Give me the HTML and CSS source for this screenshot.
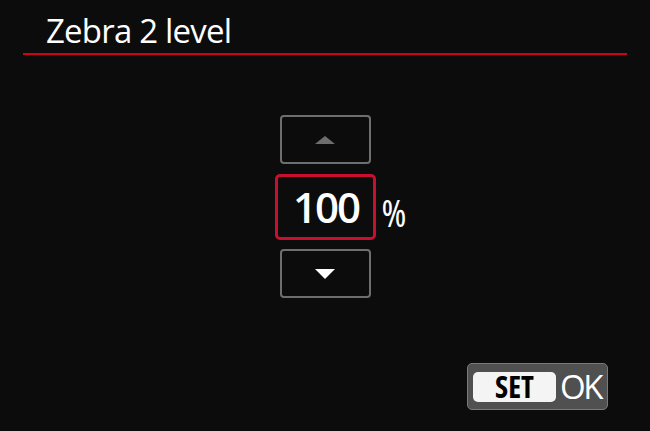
FILE: index.html
```html
<!DOCTYPE html>
<html lang="en">
  <head>
    <meta charset="UTF-8" />
    <meta name="viewport" content="width=device-width, initial-scale=1.0" />
    <title>Zebra 2 level</title>
    <link rel="stylesheet" href="styles.css">
  </head>
  <body>
    <header class="title-bar">
      <h1>Zebra 2 level</h1>
    </header>
    <main class="stepper">
      <button class="step-btn up" aria-label="Increase">
        <svg width="20" height="8" viewBox="0 0 20 8"><polygon points="10,0 20,8 0,8" /></svg>
      </button>
      <div class="value-box">100</div>
      <div class="unit">%</div>
      <button class="step-btn down" aria-label="Decrease">
        <svg width="20" height="10" viewBox="0 0 20 10"><polygon points="0,0 20,0 10,10" /></svg>
      </button>
    </main>
    <footer class="actions">
      <button class="set-ok">
        <span class="set-key">SET</span>
        <span class="ok-label">OK</span>
      </button>
    </footer>
  </body>
</html>
```
FILE: styles.css
```css
body {
  margin: 0;
  width: 650px;
  height: 431px;
  background-color: #0c0c0c;
  color: #fff;
  font-family: "Open Sans", "Noto Sans", sans-serif;
  overflow: hidden;
}
.title-bar {
  margin: 0 23px;
  height: 53px;
  border-bottom: 2px solid #d0021b;
}
.title-bar h1 {
  margin: 0;
  padding: 11px 0 0 23px;
  font-size: 33px;
  font-weight: normal;
  letter-spacing: -0.8px;
  line-height: 40px;
}
.stepper {
  display: grid;
  grid-template-columns: 1fr 101px 1fr;
  grid-template-rows: 49px 66px 49px;
  row-gap: 9.5px;
  justify-items: center;
  align-items: center;
  margin-top: 60px;
}
.step-btn {
  grid-column: 2;
  width: 91px;
  height: 49px;
  padding: 0;
  background: transparent;
  border: 2px solid #6e6e6e;
  border-radius: 4px;
  display: flex;
  align-items: center;
  justify-content: center;
}
.step-btn.up svg {
  fill: #6e6e6e;
}
.step-btn.down {
  grid-row: 3;
}
.step-btn.down svg {
  fill: #fff;
}
.value-box {
  grid-column: 2;
  grid-row: 2;
  width: 101px;
  height: 66px;
  box-sizing: border-box;
  border: 3px solid #c8102e;
  border-radius: 5px;
  display: flex;
  align-items: center;
  justify-content: center;
  padding-left: 2px;
  font-size: 42px;
  font-weight: 600;
  letter-spacing: -2px;
  line-height: 1;
}
.unit {
  grid-column: 3;
  grid-row: 2;
  justify-self: start;
  margin: 10px 0 0 6px;
  font-size: 38px;
  font-stretch: 75%;
  line-height: 1;
}
.actions {
  display: flex;
  justify-content: flex-end;
  padding: 0 42px 0 0;
  margin-top: 65px;
}
.set-ok {
  display: flex;
  align-items: center;
  gap: 4px;
  width: 141px;
  height: 47px;
  padding: 0 5px;
  box-sizing: border-box;
  background-color: #505050;
  border: 1px solid #7a7a7a;
  border-radius: 5px;
  font-family: inherit;
}
.set-key {
  width: 83px;
  height: 30px;
  flex: none;
  background-color: #f4f4f4;
  border-radius: 5px;
  color: #000;
  font-size: 30px;
  font-stretch: 75%;
  font-weight: 700;
  line-height: 30px;
  text-align: center;
}
.ok-label {
  color: #fff;
  font-size: 33px;
  letter-spacing: -2.5px;
  line-height: 1;
}
```
